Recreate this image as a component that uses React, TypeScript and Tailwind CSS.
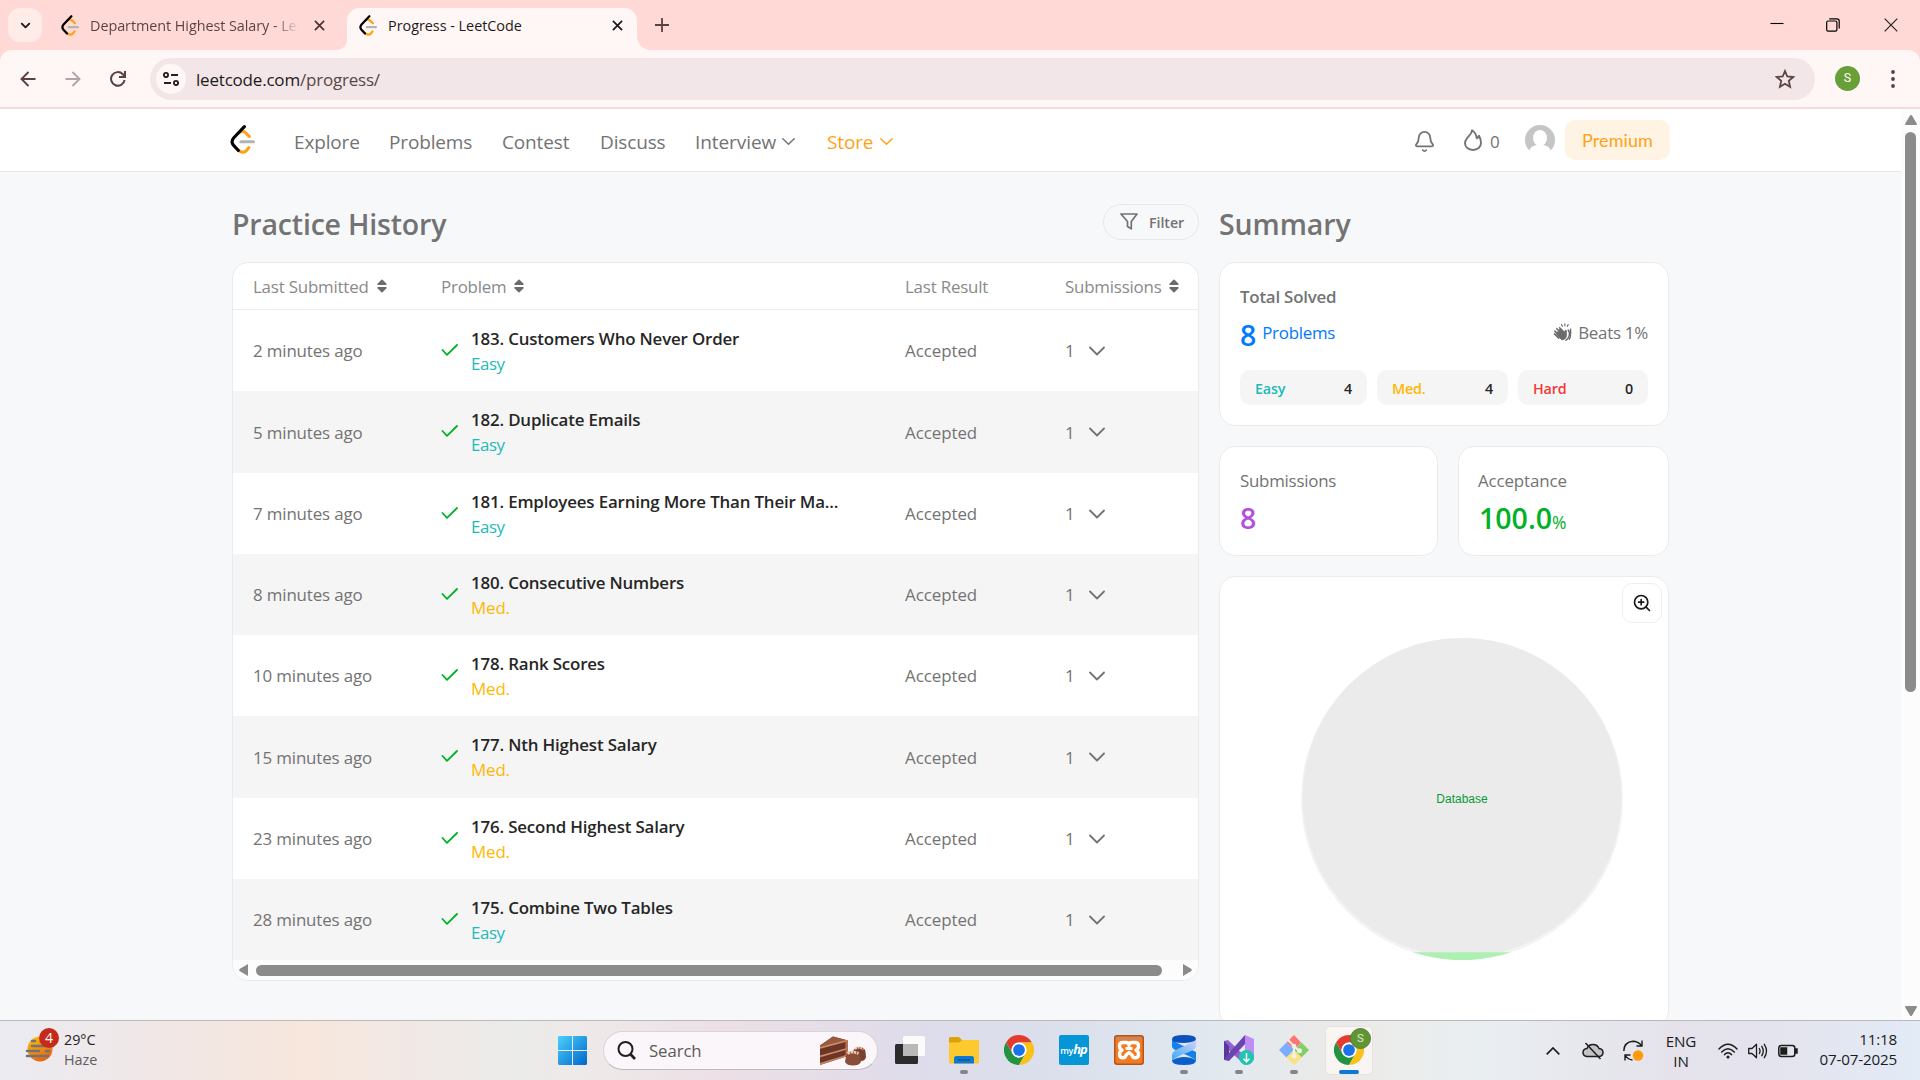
import React from "react";
import { Bell, ChevronDown, ZoomIn } from "lucide-react";

type IconProps = { className?: string };

const LeetLogo = ({ className }: IconProps) => (
  <svg viewBox="0 0 24 28" className={className} fill="none" strokeLinecap="round" strokeLinejoin="round">
    <path d="M9.5 6.8 Q12.5 5 15 7.5 L18.5 11" stroke="#ffa116" strokeWidth="3" />
    <path d="M7.5 23.8 Q12.5 28.4 16 24.5 L18 21.8" stroke="#ffa116" strokeWidth="3" />
    <path d="M10.5 16.2H22.5" stroke="#b3b3b3" strokeWidth="3" />
    <path d="M13.8 1.6 L3.4 12.6 Q0.6 16 3 19.2 L8 24.6" stroke="#000" strokeWidth="3" />
  </svg>
);

const Chrome = ({ className }: IconProps) => (
  <svg viewBox="0 0 48 48" className={className}>
    <path d="M3.215 12A24 24 0 0 1 44.785 12H24A12 12 0 0 0 13.608 30Z" fill="#e33b2e" />
    <path d="M3.215 12L13.608 30A12 12 0 0 0 34.392 30L24 48A24 24 0 0 1 3.215 12Z" fill="#229342" />
    <path d="M44.785 12A24 24 0 0 1 24 48L34.392 30A12 12 0 0 0 24 12Z" fill="#fbc116" />
    <circle cx="24" cy="24" r="12" fill="#fff" />
    <circle cx="24" cy="24" r="9.4" fill="#1a73e8" />
  </svg>
);

const Close = ({ className }: IconProps) => (
  <svg viewBox="0 0 12 12" className={className} fill="none" stroke="currentColor" strokeWidth="1.9">
    <path d="M1 1L11 11M11 1L1 11" />
  </svg>
);

const Sort = ({ className }: IconProps) => (
  <svg viewBox="0 0 10 14" className={className} fill="#6b6b6b">
    <path d="M5 0.3L9.6 4.8Q10 6 8.8 6H1.2Q0 6 0.4 4.8Z" />
    <path d="M5 13.7L9.6 9.2Q10 8 8.8 8H1.2Q0 8 0.4 9.2Z" />
  </svg>
);

const Chevron = ({ className }: IconProps) => (
  <svg viewBox="0 0 16 10" className={className} fill="none" stroke="currentColor" strokeWidth="1.8" strokeLinecap="round" strokeLinejoin="round">
    <path d="M1 1.5L8 8.5L15 1.5" />
  </svg>
);

/* ---------- Browser ---------- */

const TabStrip = () => (
  <div className="flex h-[50px] shrink-0 bg-[#ffd9d6]">
    <div className="ml-2 mt-2 flex h-[34px] w-[34px] items-center justify-center rounded-xl bg-[#ffebe8]">
      <ChevronDown size={15} strokeWidth={3} className="text-[#1f1a1a]" />
    </div>
    <div className="ml-[19px] flex h-[50px] w-[276px] items-center">
      <LeetLogo className="h-[21px] w-[18px]" />
      <span className="mt-[2px] ml-[11px] w-[209px] overflow-hidden bg-linear-to-r from-[#5a403f] from-88% to-[#5a403f00] bg-clip-text text-[14.4px] tracking-[-0.06px] whitespace-nowrap text-transparent">
        Department Highest Salary - Lee
      </span>
      <Close className="ml-[15px] h-[11px] w-[11px] text-[#4b3533]" />
    </div>
    <div className="flex w-[10px] items-end bg-[#fff7f5]">
      <div className="h-full w-full rounded-br-[14px] bg-[#ffd9d6]" />
    </div>
    <div className="h-[50px] w-[290px] bg-[#ffd9d6]">
      <div className="mt-2 flex h-[42px] items-center rounded-t-[13px] bg-[#fff7f5] pb-2 pl-[12px]">
        <LeetLogo className="h-[21px] w-[18px]" />
        <span className="mt-[2px] ml-[11px] w-[224px] text-[14.4px] tracking-[-0.02px] whitespace-nowrap text-[#1f1a1a]">Progress - LeetCode</span>
        <Close className="h-[11px] w-[11px] text-[#1f1a1a]" />
      </div>
    </div>
    <div className="flex w-[15px] bg-[#fff7f5]">
      <div className="h-full w-full rounded-bl-[14px] bg-[#ffd9d6]" />
    </div>
    <svg viewBox="0 0 14 14" className="mt-[18px] ml-[3px] h-[14px] w-[14px]" stroke="#5a403f" strokeWidth="1.8">
      <path d="M7 0V14M0 7H14" />
    </svg>
    <div className="ml-auto flex h-[50px] items-center pr-[22px]">
      <svg viewBox="0 0 14 14" className="-mt-[3px] mr-[42px] h-[14px] w-[14px]" stroke="#000" strokeWidth="1.1">
        <path d="M0.5 6.5H13.5" />
      </svg>
      <svg viewBox="0 0 14 14" className="mr-[44px] h-[14px] w-[14px]" fill="none" stroke="#000" strokeWidth="1.2">
        <rect x="0.7" y="3" width="10.2" height="10.2" rx="1.4" />
        <path d="M3.3 0.8H11Q13.2 0.8 13.2 3V10.6" />
      </svg>
      <svg viewBox="0 0 14 14" className="h-[14px] w-[14px]" stroke="#2a2020" strokeWidth="1.2">
        <path d="M0.7 0.7L13.3 13.3M13.3 0.7L0.7 13.3" />
      </svg>
    </div>
  </div>
);

const Toolbar = () => (
  <div className="shrink-0 bg-[#ffd9d6]">
    <div className="flex h-[59px] items-center rounded-t-[12px] border-b-2 border-[#f6dcd8] bg-[#fff7f5] pl-5">
      <svg viewBox="0 0 16 16" className="h-4 w-4" fill="none" stroke="#5a403f" strokeWidth="1.9">
        <path d="M15.5 8H1.5M8.5 1L1.5 8L8.5 15" />
      </svg>
      <svg viewBox="0 0 16 16" className="ml-[29px] h-4 w-4" fill="none" stroke="#b3a3a2" strokeWidth="1.9">
        <path d="M0.5 8H14.5M7.5 1L14.5 8L7.5 15" />
      </svg>
      <svg viewBox="0 0 16 16" className="ml-[29px] h-4 w-4" fill="none" stroke="#5a403f" strokeWidth="2">
        <path d="M14.6 9A6.8 6.8 0 1 1 12.8 3.2L14.6 5" />
        <path d="M15 0V6H9" />
      </svg>
      <div className="ml-[24px] flex h-[42px] w-[1665px] items-center rounded-full bg-[#f2e6e8] pl-[6px]">
        <div className="flex h-[30px] w-[30px] items-center justify-center rounded-full bg-[#fff7f5]">
          <svg viewBox="0 0 16 14" className="h-[14px] w-4" fill="none" stroke="#2a2020" strokeWidth="1.9">
            <circle cx="3" cy="3" r="2.1" />
            <path d="M8 3H15M1 11H8" />
            <circle cx="13" cy="11" r="2.1" />
          </svg>
        </div>
        <div className="mt-[2px] ml-[10px] text-[17px] tracking-[-0.2px] whitespace-nowrap text-[#5a4645]">
          <span className="text-[#1f1a1a]">leetcode.com</span>/progress/
        </div>
        <svg viewBox="0 0 20 20" className="mr-[20px] ml-auto h-[20px] w-[20px]" fill="none" stroke="#5a4645" strokeWidth="1.8">
          <path d="M10 2L12.3 7.5L18.3 8L13.8 11.9L15.1 17.8L10 14.7L4.9 17.8L6.2 11.9L1.7 8L7.7 7.5Z" />
        </svg>
      </div>
      <div className="ml-5 flex h-[25px] w-[25px] items-center justify-center rounded-full bg-[#689f38] text-[12.5px] text-white font-[Roboto]">S</div>
      <svg viewBox="0 0 4 18" className="ml-[31px] h-[18px] w-[4px]" fill="#5a403f">
        <circle cx="2" cy="2" r="1.9" />
        <circle cx="2" cy="9" r="1.9" />
        <circle cx="2" cy="16" r="1.9" />
      </svg>
    </div>
  </div>
);

/* ---------- Site ---------- */

const SiteHeader = () => (
  <header className="flex h-[63px] shrink-0 border-b border-[#e6e6e6] bg-white pl-[230px] text-[19px] tracking-[-0.15px] whitespace-nowrap text-[#737373]">
    <LeetLogo className="mt-[16px] h-[29px] w-[25px]" />
    <nav className="mt-[3px] ml-[39px] flex h-[60px] items-center">
      <span className="w-[95px]">Explore</span>
      <span className="w-[113px]">Problems</span>
      <span className="w-[98px]">Contest</span>
      <span className="w-[95px]">Discuss</span>
      <span className="w-[87px] tracking-[-0.08px]">Interview</span>
      <Chevron className="-mt-[2px] h-[9px] w-[13px]" />
      <span className="ml-[32px] w-[53px]  text-[#ffa116]">Store</span>
      <Chevron className="-mt-[2px] h-[9px] w-[13px] text-[#ffa116]" />
    </nav>
    <div className="ml-[520px] flex h-[62px] items-center">
      <Bell size={23} strokeWidth={1.9} className="mt-[2px]" />
      <svg viewBox="0 0 18 22" className="ml-[28px] h-[22px] w-[18px]" fill="none" stroke="currentColor" strokeWidth="1.9" strokeLinejoin="round">
        <path d="M8 1.2C8.3 4.5 5 6.5 3 9.3C1.6 11.2 1 12.7 1 14.2C1 18.2 4.5 21 9 21C13.5 21 17 18.2 17 14C17 11 16.2 9 15 6.8C14.6 8.3 13.9 9 12.8 9.3C12.4 6 10.8 3 8 1.2Z" />
      </svg>
      <span className="mt-[3px] ml-[8px] w-[35px] text-[17px]">0</span>
      <svg viewBox="0 0 30 30" className="-mt-[1px] h-[30px] w-[30px]">
        <circle cx="15" cy="15" r="15" fill="#c5c5c5" />
        <ellipse cx="15" cy="13" rx="7" ry="8" fill="#fff" />
        <path d="M4 27Q5 20.500 12 20L18 20Q25 20.500 26 27L22 30H8Z" fill="#fff" />
      </svg>
      <div className="ml-[10px] flex h-[40px] w-[105px] items-center justify-center rounded-[10px] bg-[#fff3e3] text-[18px] tracking-[0.1px] text-[#ffa116] font-[Lato]">Premium</div>
    </div>
  </header>
);

type Level = "Easy" | "Med.";
const rows: { ago: string; title: string; level: Level }[] = [
  { ago: "2 minutes ago", title: "183. Customers Who Never Order", level: "Easy" },
  { ago: "5 minutes ago", title: "182. Duplicate Emails", level: "Easy" },
  { ago: "7 minutes ago", title: "181. Employees Earning More Than Their Ma...", level: "Easy" },
  { ago: "8 minutes ago", title: "180. Consecutive Numbers", level: "Med." },
  { ago: "10 minutes ago", title: "178. Rank Scores", level: "Med." },
  { ago: "15 minutes ago", title: "177. Nth Highest Salary", level: "Med." },
  { ago: "23 minutes ago", title: "176. Second Highest Salary", level: "Med." },
  { ago: "28 minutes ago", title: "175. Combine Two Tables", level: "Easy" },
];

const History = () => (
  <section className="w-[967px]">
    <div className="flex h-[90px] items-center justify-between">
      <h1 className="mt-[14px] text-[28.5px] font-semibold tracking-[-0.18px] text-[#737373]">Practice History</h1>
      <div className="mt-[9px] flex h-[36px] w-[96px] items-center rounded-full border border-[#e8e8ea] pl-[16px] text-[14.2px] font-semibold tracking-[-0.05px] text-[#737373]">
        <svg viewBox="0 0 18 17" className="h-[17px] w-[18px]" fill="none" stroke="currentColor" strokeWidth="1.7" strokeLinejoin="round">
          <path d="M1 1H17L11.3 8.5V15.8L7.5 13.5V8.5Z" />
        </svg>
        <span className="mt-[2px] ml-[11px]">Filter</span>
      </div>
    </div>
    <div className="h-[719px] overflow-hidden rounded-2xl border border-[#ebebeb] bg-white text-[16.9px] tracking-[-0.14px] whitespace-nowrap text-[#737373]">
      <div className="grid h-[47px] grid-cols-[188px_464px_160px_1fr] items-center border-b border-[#ededed] pt-[2px] pl-[20px] tracking-[-0.2px] text-[#8a8a8a]">
        <div className="flex items-center"><span className="w-[124px]">Last Submitted</span><Sort className="-mt-[2px] h-[14px] w-[10px]" /></div>
        <div className="flex items-center"><span className="w-[73px]">Problem</span><Sort className="-mt-[2px] h-[14px] w-[10px]" /></div>
        <div>Last Result</div>
        <div className="flex items-center"><span className="w-[104px]">Submissions</span><Sort className="-mt-[2px] h-[14px] w-[10px]" /></div>
      </div>
      {rows.map((r) => (
        <div key={r.title} className="grid h-[81.25px] grid-cols-[188px_464px_160px_1fr] items-center pt-[1px] pl-[20px] even:bg-white odd:bg-[#f5f5f5]">
          <div>{r.ago}</div>
          <div className="flex items-center">
            <svg viewBox="0 0 17 12" className="-mt-[2px] h-[12px] w-[17px]" fill="none" stroke="#02b128" strokeWidth="1.8" strokeLinecap="round" strokeLinejoin="round">
              <path d="M1.5 6L6 10.800L16 1" />
            </svg>
            <div className="ml-[13px] flex flex-col leading-[25px]">
              <span className="font-semibold tracking-[-0.17px] text-[#262626]">{r.title}</span>
              <span className={r.level === "Easy" ? "tracking-[-0.4px] text-[#1cbaba]" : "text-[#ffb700]"}>{r.level}</span>
            </div>
          </div>
          <div className="tracking-[-0.05px]">Accepted</div>
          <div className="flex items-center"><span className="w-[24px]">1</span><Chevron className="h-[10px] w-[16px]" /></div>
        </div>
      ))}
      <div className="flex h-[20px] items-center bg-[#fcfcfc] pl-[6px]">
        <svg viewBox="0 0 9 12" className="h-[12px] w-[9px]" fill="#8b8b8b"><path d="M9 0V12L0.5 7Q0 6 0.5 5Z" /></svg>
        <div className="ml-[8px] h-[11px] w-[906px] rounded-full bg-[#8b8b8b]" />
        <svg viewBox="0 0 9 12" className="ml-[21px] h-[12px] w-[9px]" fill="#8b8b8b"><path d="M0 0V12L8.5 7Q9 6 8.5 5Z" /></svg>
      </div>
    </div>
  </section>
);

const Clap = () => (
  <svg viewBox="0 0 20 20" className="h-[19px] w-[19px]" fill="none" stroke="#6b6b6b" strokeLinecap="round">
    <path d="M4 12L9 17.5Q13 18 14 14V8Q13 7 12.5 8.5V11L7.5 6Z" fill="#6b6b6b" strokeWidth="1" />
    <path d="M1.6 11.5L6 16M2 8.5L7 13.5M4 6L9 11M7 5L12 10" strokeWidth="1.7" />
    <path d="M16 7.5Q18 9.5 17 13.5Q16.2 16.5 13.5 18.2" strokeWidth="1.5" />
    <path d="M18.5 6.5V11Q18.6 15 17.2 17" strokeWidth="1.5" />
    <path d="M12.5 0.8V3M9 1.7L10 3.5M16 1.7L15 3.5" strokeWidth="1.2" />
  </svg>
);

const chips = [
  { label: "Easy", value: 4, color: "text-[#1cbaba]" },
  { label: "Med.", value: 4, color: "text-[#ffb700]" },
  { label: "Hard", value: 0, color: "text-[#f63737]" },
];

const Summary = () => (
  <section className="ml-[20px] w-[450px] text-[16.9px] tracking-[-0.14px] whitespace-nowrap text-[#737373]">
    <div className="flex h-[90px] items-center">
      <h1 className="mt-[14px] text-[28.5px] font-semibold tracking-[-0.1px]">Summary</h1>
    </div>
    <div className="h-[164px] rounded-2xl border border-[#ebebeb] bg-white px-[20px] pt-[22px]">
      <div className="leading-6 font-semibold tracking-[-0.22px]">Total Solved</div>
      <div className="mt-[7px] flex h-[34px] items-center">
        <span className="mt-[4px] text-[28.5px] font-semibold text-[#007aff]">8</span>
        <span className="ml-[6px] tracking-[-0.25px] text-[#007aff]">Problems</span>
        <div className="ml-auto flex items-center gap-[6px]"><Clap /><span className="tracking-[-0.25px]">Beats 1%</span></div>
      </div>
      <div className="mt-[20px] grid grid-cols-[127px_131px_130px] gap-[10px]">
        {chips.map((c) => (
          <div key={c.label} className="flex h-[35px] items-center justify-between rounded-[10px] bg-[#f5f5f5] pt-[2px] pr-[15px] pl-[15px] text-[14.3px] font-semibold tracking-[-0.15px]">
            <span className={c.color}>{c.label}</span>
            <span className="text-[#262626]">{c.value}</span>
          </div>
        ))}
      </div>
    </div>
    <div className="mt-[20px] flex gap-[20px]">
      <div className="h-[110px] w-[219px] rounded-2xl border border-[#ebebeb] bg-white pt-[22px] pl-[20px]">
        <div className="leading-6 tracking-[-0.25px]">Submissions</div>
        <div className="mt-[8px] text-[28.5px] leading-[34px] font-semibold text-[#af52de]">8</div>
      </div>
      <div className="h-[110px] w-[211px] rounded-2xl border border-[#ebebeb] bg-white pt-[22px] pl-[19px]">
        <div className="leading-6 tracking-[-0.12px]">Acceptance</div>
        <div className="mt-[8px] ml-[1px] text-[28.5px] leading-[34px] font-semibold tracking-normal text-[#02b128]">100.0<span className="text-[17.5px] font-medium">%</span></div>
      </div>
    </div>
    <div className="mt-[20px] h-[451px] overflow-hidden rounded-2xl border border-[#ebebeb] bg-white pt-[6px]">
      <div className="mr-[6px] ml-auto flex h-[40px] w-[40px] items-center justify-center rounded-[10px] border border-[#efefef] text-[#1a1a1a]">
        <ZoomIn size={20} strokeWidth={2} />
      </div>
      <svg viewBox="0 0 322 322" className="mt-[15px] ml-[81px] h-[322px] w-[322px]">
        <circle cx="161" cy="161" r="161" fill="#f3f3f3" />
        <circle cx="161" cy="159.5" r="159.5" fill="#ebebeb" />
        <path d="M111.7 314.3H210.3A161 161 0 0 1 111.7 314.3Z" fill="#aef0b2" />
        <text x="161" y="165.3" textAnchor="middle" fill="#0a9b33" fontSize="12" fontFamily="Liberation Sans, sans-serif" letterSpacing="0">Database</text>
      </svg>
    </div>
  </section>
);

const PageScroll = () => (
  <div className="flex w-[19px] flex-col items-center bg-[#fcfcfc] pt-[6px]">
    <svg viewBox="0 0 12 10" className="h-[10px] w-[12px]" fill="#8b8b8b"><path d="M6 0Q6.6 0 7 0.6L12 9Q12 10 11 10H1Q0 10 0 9L5 0.6Q5.4 0 6 0Z" /></svg>
    <div className="mt-[7px] h-[560px] w-[11px] rounded-full bg-[#8b8b8b]" />
    <svg viewBox="0 0 12 10" className="mt-auto mb-[4px] h-[10px] w-[12px]" fill="#8b8b8b"><path d="M6 10Q6.6 10 7 9.4L12 1Q12 0 11 0H1Q0 0 0 1L5 9.4Q5.4 10 6 10Z" /></svg>
  </div>
);

/* ---------- Taskbar ---------- */

const TaskItem = ({ children, dot }: { children: React.ReactNode; dot?: boolean }) => (
  <div className="flex h-[59px] w-[55px] flex-col items-center pt-[14px]">
    {children}
    {dot && <div className="mt-[5px] h-[4px] w-[8px] rounded-full bg-[#858589]" />}
  </div>
);

const Taskbar = () => (
  <footer className="flex h-[60px] shrink-0 border-t border-[#b9b9bc] bg-[linear-gradient(90deg,#ebebf2_0%,#f1e7e5_9%,#f7e7dc_16%,#f1e8e5_21%,#ebebea_27%,#eee9e8_31%,#ecdfe6_38%,#dedcea_48%,#dbe0ec_55%,#e2e9ef_64%,#eceae7_70%,#e9eef1_77%,#e5e2eb_87%,#e4e4ee_93%,#e2ebf6_100%)] whitespace-nowrap">
    <div className="flex w-[558px]">
      <svg viewBox="0 0 36 36" className="mt-[6px] ml-[24px] h-[36px] w-[36px]">
        <defs>
          <linearGradient id="sun" x1="0" y1="0" x2="0.5" y2="1">
            <stop offset="0" stopColor="#f8c80c" />
            <stop offset="1" stopColor="#ea6412" />
          </linearGradient>
        </defs>
        <circle cx="16" cy="22" r="12.5" fill="url(#sun)" />
        <path d="M8 14H11M8 19H29M3 24H15M22 24H25M3 29H24" stroke="#737373" strokeWidth="2.6" strokeLinecap="round" />
        <circle cx="25" cy="11" r="10" fill="#c42b1c" />
        <text x="25" y="16" textAnchor="middle" fontSize="14" fill="#fff" fontFamily="Open Sans, sans-serif">4</text>
      </svg>
      <div className="mt-[9px] ml-[4px] text-[14.4px] leading-[20px] tracking-[-0.05px]">
        <div className="text-[#1f1f1f]">29°C</div>
        <div className="text-[#5f5f5f]">Haze</div>
      </div>
    </div>
    <svg viewBox="0 0 29 29" className="mt-[15px] h-[29px] w-[29px]">
      <defs>
        <linearGradient id="win" x1="0" y1="0" x2="1" y2="1">
          <stop offset="0" stopColor="#4cd0fc" />
          <stop offset="1" stopColor="#0067cb" />
        </linearGradient>
      </defs>
      <path d="M1 0H14V14H0V1ZM15 0H28L29 1V14H15ZM0 15H14V29H1L0 28ZM15 15H29V28L28 29H15Z" fill="url(#win)" />
    </svg>
    <div className="mt-[10px] ml-[16px] flex h-[39px] w-[275px] items-center rounded-full border border-[#d9d4d8] border-b-[#bdb9be] bg-[#faf6f9] pl-[13px]">
      <svg viewBox="0 0 19 19" className="h-[19px] w-[19px]" fill="none" stroke="#1f1f1f" strokeWidth="2">
        <circle cx="8.5" cy="8" r="7" />
        <path d="M13.3 13L18 18" strokeWidth="2.6" />
      </svg>
      <span className="ml-[13px] text-[16.8px] tracking-[-0.1px] text-[#5c5a5c]">Search</span>
      <svg viewBox="0 0 46 30" className="mr-[11px] ml-auto h-[30px] w-[46px]">
        <path d="M0 9.5L13 0.5L28 4.5V20L0 29Z" fill="#6b3527" />
        <path d="M0 9.5L13 0.5L28 4.5L0 12Z" fill="#9a5a42" />
        <path d="M0 12L28 4.5M0 20.5L28 12.5" stroke="#d08a68" strokeWidth="1.8" />
        <path d="M28 4.5V20L25.5 20.7V5.2Z" fill="#b87050" />
        <path d="M0 27L26 19V20.5L0 29Z" fill="#c98463" />
        <path d="M33.5 14Q36 10.5 40 11Q45 11.5 45.5 16L46 21Q45 25 41 25Q35 24 33.5 14Z" fill="#7a412e" />
        <path d="M26 20Q27 15.500 33 15.500Q39.500 15.500 40 20L41 26Q39 29.500 33 29.500Q27 29.500 25 26Z" fill="#8a4d38" />
        <path d="M27.500 17.500Q32 14.500 38.500 17.500" stroke="#e8cbb0" strokeWidth="2.800" strokeDasharray="2.500 0.800" fill="none" />
        <path d="M35 13Q39 10 43.500 13.500" stroke="#e8cbb0" strokeWidth="2.200" strokeDasharray="2 0.800" fill="none" />
      </svg>
    </div>
    <div className="ml-[3px] flex">
      <TaskItem>
        <svg viewBox="0 0 30 30" className="mt-[1px] ml-[2px] h-[30px] w-[30px]">
          <rect x="0" y="8" width="23" height="20" rx="1.5" fill="#2c2c2c" />
          <rect x="8" y="0" width="22" height="20" rx="1.5" fill="#fbfbfb" />
          <rect x="8" y="8" width="15" height="12" fill="#b9b9b9" />
        </svg>
      </TaskItem>
      <TaskItem dot>
        <svg viewBox="0 0 30 30" className="h-[30px] w-[30px]">
          <path d="M0 3.5Q0 2 1.5 2H10L13 5H28.5Q30 5 30 6.5V12H0Z" fill="#e0a008" />
          <path d="M0 7.5H10L13.5 5H28.5Q30 5 30 6.5V27Q30 28.5 28.5 28.5H1.5Q0 28.5 0 27Z" fill="#fdc92f" />
          <path d="M5 28.5V23.500Q5 21 7.500 21H22.500Q25 21 25 23.500V28.500Z" fill="#0e78d1" />
          <path d="M9 25H21" stroke="#0a4f95" strokeWidth="1.3" />
        </svg>
      </TaskItem>
      <TaskItem><Chrome className="h-[30px] w-[30px]" /></TaskItem>
      <TaskItem>
        <div className="flex h-[30px] w-[30px] items-baseline justify-center rounded-[2px] bg-[#0496d6] pt-[8px] text-[9px] leading-none font-semibold tracking-[-0.2px] text-white">
          <span>my</span>
          <span className="text-[13px] font-bold tracking-[-1px] italic">hp</span>
        </div>
      </TaskItem>
      <TaskItem>
        <svg viewBox="0 0 30 30" className="h-[30px] w-[30px]">
          <rect width="30" height="30" rx="3" fill="#b4561b" />
          <rect x="1.5" y="1.5" width="27" height="27" rx="2" fill="#f47a20" />
          <path d="M2 2H28V5H2Z" fill="#ce8559" />
          <path d="M8.5 7.500H12Q15 7.500 15 10.500Q15 7.500 18 7.500H21Q24.500 7.500 24.500 11Q24.500 14 22 15Q24.500 16.500 24.500 19.500Q24.500 22.800 21 22.800Q18.500 22.800 18 20L15 17.500L12 20Q11.500 22.800 9 22.800Q5.500 22.800 5.500 19.500Q5.500 16.500 8 15Q5.500 14 5.500 11Q5.500 7.500 8.500 7.500Z" fill="none" stroke="#fff" strokeWidth="3.400" strokeLinejoin="round" />
          <path d="M11.500 13.500H18.500" stroke="#fff" strokeWidth="3" />
        </svg>
      </TaskItem>
      <TaskItem dot>
        <svg viewBox="0 0 24 30" className="h-[30px] w-[24px]">
          <defs>
            <linearGradient id="ads" x1="0" y1="1" x2="1" y2="0">
              <stop offset="0" stopColor="#3fa9f5" />
              <stop offset="1" stopColor="#d3d3fb" />
            </linearGradient>
          </defs>
          <path d="M0 4Q4 8 14 12L24 17V25.500Q20 22 12 19Q1 15 0 12Z" fill="#1580ea" />
          <path d="M24 4Q20 8 10 12Q0 16 0 20V25.500Q4 22 12 19Q23 15 24 12Z" fill="url(#ads)" />
          <path d="M0 4Q0 0 12 0Q24 0 24 4Q24 7 12 8Q0 8 0 4Z" fill="#0b52bd" />
          <path d="M0 25.500Q5 22 12 22Q20 22 24 25.500Q24 30 12 30Q0 30 0 25.500Z" fill="#0a5fcb" />
        </svg>
      </TaskItem>
      <TaskItem dot>
        <svg viewBox="0 0 30 30" className="h-[30px] w-[30px]">
          <path d="M0 6L4 5L24 24L21 30L0 11Z" fill="#9460d4" />
          <path d="M0 6L5 11V20L0 25Z" fill="#59389b" />
          <path d="M0 25L5 26L22 8L21 0L5 18Z" fill="#6b45ad" />
          <path d="M21 0L30 4V25L21 30Z" fill="#c08cf5" />
          <circle cx="22.5" cy="22.5" r="7.5" fill="#1fc5ad" />
          <path d="M22.5 18V26.5M19.5 23.8L22.5 26.8L25.5 23.8" stroke="#fff" strokeWidth="1.5" fill="none" />
        </svg>
      </TaskItem>
      <TaskItem dot>
        <svg viewBox="0 0 30 30" className="h-[30px] w-[30px]">
          <path d="M15 0L22 7.5L15 15L7.5 7.5Z" fill="#ff7373" />
          <path d="M22.5 7.5L30 15L22.5 22.5L15 15Z" fill="#84cf65" />
          <path d="M7.5 7.5L15 15L7.5 22.5L0 15Z" fill="#7aacff" />
          <path d="M15 15L22.5 22.5L15 30L7.5 22.5Z" fill="#fbe27f" />
          <path d="M9 5L15 11V21M15 11L20 16" stroke="#f3efe9" strokeWidth="2" fill="none" />
          <circle cx="15" cy="11" r="2.3" fill="#f3efe9" />
          <circle cx="15" cy="21" r="2.5" fill="#f3efe9" />
          <circle cx="20.5" cy="15.8" r="2.5" fill="#f3efe9" />
        </svg>
      </TaskItem>
      <div className="mt-[5px] ml-[4px] flex h-[49px] w-[48px] flex-col items-center rounded-[5px] border border-[#e6e2e0] bg-[#f8f5f3] pt-[8px]">
        <div className="relative">
          <Chrome className="h-[30px] w-[30px]" />
          <div className="absolute -top-[7px] left-[16px] flex h-[21px] w-[21px] items-center justify-center rounded-full border border-[#5a7a4a] bg-[#5f9632] text-[11.5px] text-[#dfe9d6] font-[Roboto]">S</div>
        </div>
        <div className="mt-[5px] h-[4px] w-[20px] rounded-full bg-[#0f78d4]" />
      </div>
    </div>
    <div className="ml-auto flex h-[59px] items-center pr-[23px] text-[15.2px] leading-[20px] tracking-[-0.18px] text-[#1c1c1c]">
      <svg viewBox="0 0 14 8" className="h-[8px] w-[14px]" fill="none" stroke="currentColor" strokeWidth="1.7">
        <path d="M0.7 7.3L7 1L13.3 7.3" />
      </svg>
      <svg viewBox="0 0 22 18" className="ml-[22px] h-[18px] w-[22px]" fill="#c3c3c3" stroke="currentColor" strokeWidth="1.5">
        <path d="M5 14.5Q1 14 1 10.5Q1 7 5 6.5Q6.5 2.5 11 2.5Q15.5 2.5 17 6.5Q21 7 21 10.5Q21 14 17 14.5Z" />
        <path d="M3.5 1L18.5 17" />
      </svg>
      <svg viewBox="0 0 21 21" className="ml-[19px] h-[21px] w-[21px]" fill="none" stroke="currentColor" strokeWidth="1.4">
        <path d="M0.8 11Q1 2 10 1.2Q15 1.2 18.5 5.5M19 0.5V6H13.5" />
        <path d="M2 20.5V15H7.5M2 15Q4.5 19.5 9.5 20" />
        <circle cx="15" cy="15.5" r="5.2" fill="#ff9b0b" stroke="none" />
      </svg>
      <div className="ml-[21px] w-[32px] text-center"><div>ENG</div><div>IN</div></div>
      <svg viewBox="0 0 20 16" className="ml-[21px] h-[16px] w-[20px]" fill="none" stroke="currentColor" strokeWidth="1.5" strokeLinecap="round">
        <path d="M1 6Q10 -3.5 19 6M3.7 9Q10 2.3 16.3 9M6.5 11.6Q10 8 13.5 11.6" />
        <circle cx="10" cy="14" r="1.5" fill="currentColor" stroke="none" />
      </svg>
      <svg viewBox="0 0 20 16" className="ml-[10px] h-[16px] w-[20px]" fill="none" stroke="currentColor" strokeWidth="1.3" strokeLinecap="round" strokeLinejoin="round">
        <path d="M0.7 5.5H4L8.5 1.2V14.8L4 10.5H0.7Z" />
        <path d="M11.3 5.5Q12.8 8 11.3 10.5M13.8 3.3Q16.7 8 13.8 12.7M16.3 1.3Q20.7 8 16.3 14.7" />
      </svg>
      <svg viewBox="0 0 20 14" className="ml-[10px] h-[14px] w-[20px]" fill="none" stroke="currentColor" strokeWidth="1.5">
        <rect x="0.8" y="1.5" width="16" height="11" rx="2.5" />
        <path d="M3 4H8.5V10H3Z" fill="currentColor" />
        <path d="M17.5 5H19V9H17.5Z" fill="currentColor" />
      </svg>
      <div className="ml-[20px] w-[79px] text-right -mt-[3px]"><div>11:18</div><div>07-07-2025</div></div>
    </div>
  </footer>
);

export default function App() {
  return (
    <div className="flex h-[1080px] w-[1920px] flex-col overflow-hidden bg-[#f7f8fa] font-['Open_Sans',sans-serif]">
      <TabStrip />
      <Toolbar />
      <div className="flex h-[911px] shrink-0">
        <div className="flex h-[911px] w-[1901px] flex-col overflow-hidden">
          <SiteHeader />
          <main className="flex pl-[232px]">
            <History />
            <Summary />
          </main>
        </div>
        <PageScroll />
      </div>
      <Taskbar />
    </div>
  );
}
